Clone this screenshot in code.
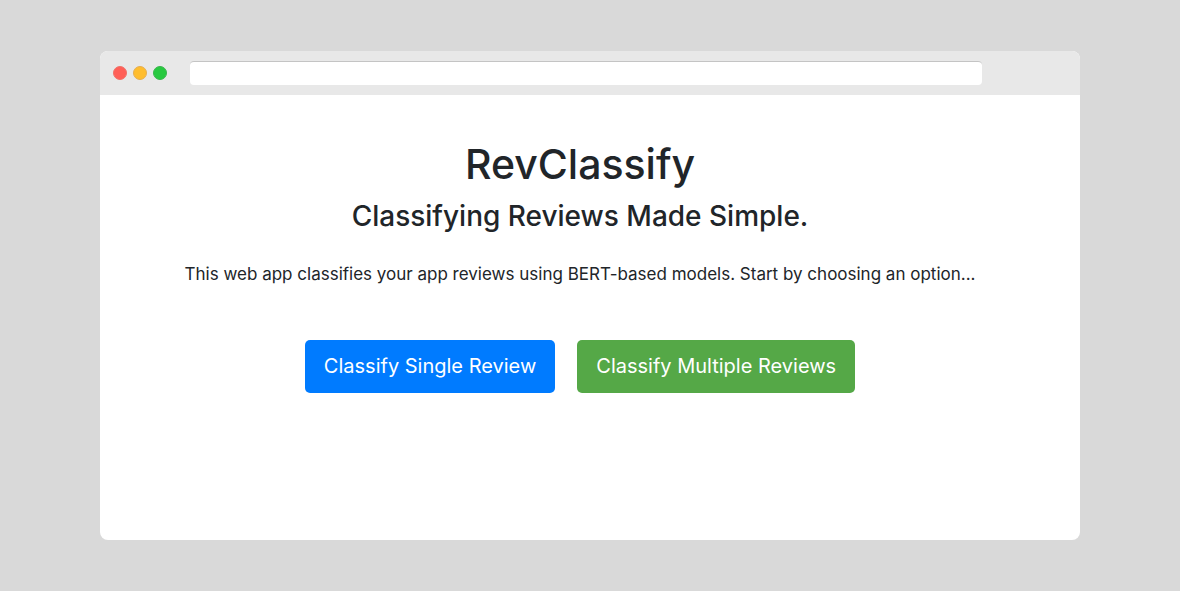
<main class="stage">
  <section class="window">
    <header class="bar">
      <div class="dots">
        <span class="dot red"></span>
        <span class="dot yellow"></span>
        <span class="dot green"></span>
      </div>
      <input class="address" type="text" aria-label="Address" />
    </header>
    <div class="content">
      <h1>RevClassify</h1>
      <h2>Classifying Reviews Made Simple.</h2>
      <p>This web app classifies your app reviews using BERT-based models. Start by choosing an option...</p>
      <div class="actions">
        <button class="primary" type="button">Classify Single Review</button>
        <button class="success" type="button">Classify Multiple Reviews</button>
      </div>
    </div>
  </section>
</main>

<style>
  :global(body) {
    margin: 0;
    background: #d9d9d9;
  }
  .stage {
    box-sizing: border-box;
    min-height: 100vh;
    padding: 51px 100px;
    display: flex;
    font-family: Inter, "Liberation Sans", sans-serif;
    color: #212529;
  }
  .window {
    flex: 1;
    display: flex;
    flex-direction: column;
    background: #fff;
    border-radius: 8px;
    overflow: hidden;
  }
  .bar {
    display: flex;
    align-items: center;
    gap: 23px;
    padding: 10px 98px 10px 13px;
    background: #e8e8e8;
  }
  .dots {
    display: flex;
    gap: 6px;
  }
  .dot {
    box-sizing: border-box;
    width: 14px;
    height: 14px;
    border-radius: 50%;
  }
  .red { background: #ff5f57; border: 1px solid #f07068; }
  .yellow { background: #ffbd2e; border: 1px solid #e5ae50; }
  .green { background: #28c940; border: 1px solid #3ab54c; }
  .address {
    box-sizing: border-box;
    flex: 1;
    min-width: 0;
    height: 24px;
    padding: 0 8px;
    border: 0;
    border-top: 1px solid #c4c4c4;
    border-radius: 4px;
    background: #fff;
    font: inherit;
    font-size: 14px;
  }
  .content {
    display: flex;
    flex-direction: column;
    align-items: center;
    padding: 42px 60px 40px 40px;
    text-align: center;
  }
  h1 {
    margin: 0 0 7px;
    font-size: 41px;
    line-height: 54px;
    font-weight: 500;
  }
  h2 {
    margin: 0 0 27px;
    font-size: 28px;
    line-height: 36px;
    font-weight: 500;
  }
  p {
    margin: 0 0 53px;
    font-size: 17px;
    line-height: 26px;
  }
  .actions {
    display: flex;
    flex-wrap: wrap;
    justify-content: center;
    gap: 22px;
  }
  button {
    padding: 10px 19px;
    border: 0;
    border-radius: 5px;
    color: #fff;
    font: inherit;
    font-size: 20px;
    line-height: 33px;
  }
  .primary { background: #007bff; }
  .success { background: #55a847; }
</style>
